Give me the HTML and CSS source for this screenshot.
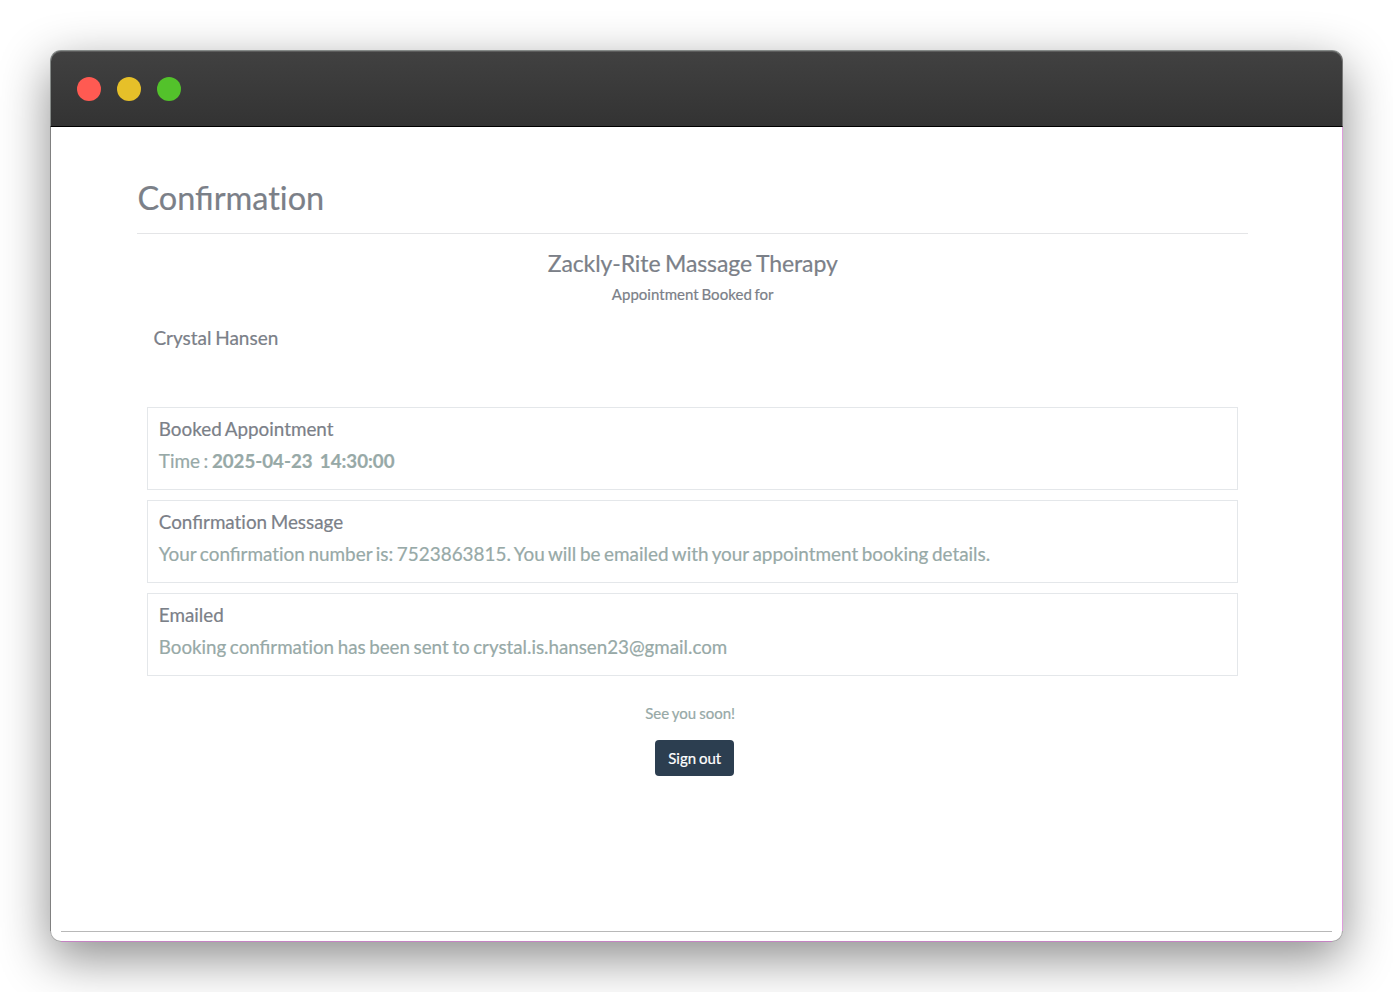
FILE: index.html
```html
<!DOCTYPE html>
<html lang="en">
<head>
<meta charset="utf-8">
<title>Confirmation</title>
<link rel="stylesheet" href="styles.css">
</head>
<body>
<div class="window">
  <div class="titlebar">
    <span class="dot red"></span><span class="dot yellow"></span><span class="dot green"></span>
  </div>
  <main class="content">
    <h1>Confirmat&zwnj;ion</h1>
    <header class="business">
      <h2>Zackly-Rite Massage Therapy</h2>
      <p>Appointment Booked for</p>
    </header>
    <p class="client">Crystal Hansen</p>
    <div class="cards">
      <section class="card">
        <h3>Booked Appointment</h3>
        <p>Time : <b>2025-04-23&nbsp; 14:30:00</b></p>
      </section>
      <section class="card">
        <h3>Confirmat&zwnj;ion Message</h3>
        <p class="message">Your confirmat&zwnj;ion number is: 7523863815. You will be emailed with your appointment booking details.</p>
      </section>
      <section class="card">
        <h3>Emailed</h3>
        <p class="emailed">Booking confirmat&zwnj;ion has been sent to crystal.is.hansen23@gmail.com</p>
      </section>
    </div>
    <footer class="closing">
      <p>See you soon!</p>
      <button class="signout">Sign out</button>
    </footer>
  </main>
  <div class="base"><div class="base-line"></div></div>
</div>
</body>
</html>
```
FILE: styles.css
```css
* { box-sizing: border-box; }
body {
  margin: 0;
  padding: 50px;
  height: 992px;
  overflow: hidden;
  background: #fff;
  font-family: Lato, sans-serif;
  color: #7b8088;
  word-spacing: -1.2px;
}
h1, h2, h3, p { margin: 0; font-weight: 400; -webkit-text-stroke: .2px currentColor; }
.window {
  display: flex;
  flex-direction: column;
  width: 1293px;
  height: 892px;
  border-radius: 11px;
  background: #fff;
  box-shadow: 0 16px 50px rgba(0, 0, 0, .46);
}
.titlebar {
  display: flex;
  align-items: center;
  gap: 16px;
  height: 77px;
  padding: 0 26px;
  border: 1px solid #858a88;
  border-right-color: #777;
  border-bottom-color: #000;
  border-radius: 11px 11px 0 0;
  background: linear-gradient(#414141, #333);
  box-shadow: inset 0 1px #5c5c5c;
}
.dot { width: 24px; height: 24px; border-radius: 50%; }
.red { background: #ff5a52; }
.yellow { background: #e6c029; }
.green { background: #53c22b; }
.content {
  flex: 1;
  padding: 49px 94px 0 86.4px;
  border-left: 1px solid #808080;
  border-right: 1px solid #df9cdc;
}
h1 {
  height: 58px;
  border-bottom: 1px solid #e4e5e7;
  font-size: 32.5px;
  line-height: 43px;
}
.business { padding-top: 14px; text-align: center; }
.business h2 { font-size: 23px; line-height: 30px; letter-spacing: -.1px; }
.business p { font-size: 15px; line-height: 20px; margin-top: 6px; letter-spacing: .04px; }
.client { margin: 20px 16px 0; font-size: 19px; line-height: 28px; }
.cards { display: grid; gap: 10px; margin: 55px 10px 0; }
.card {
  height: 83px;
  padding: 7px 10px 7px 10.4px;
  border: 1px solid #e4e7ea;
  font-size: 18.9px;
}
.card h3 { font-size: 18.85px; line-height: 28px; }
.card p { margin-top: 4px; line-height: 28px; color: #97a9a7; }
.card b { font-size: 18.7px; word-spacing: -.9px; }
.card .emailed { font-size: 18.75px; }
.closing { display: flex; flex-direction: column; align-items: center; }
.closing p { margin: 26px 5px 0 0; font-size: 15px; line-height: 22px; color: #97a9a7; word-spacing: -.8px; }
.signout {
  width: 79px;
  height: 36px;
  margin: 16px 0 0 4px;
  padding: 0;
  border: 0;
  border-radius: 4px;
  background: #2c3e50;
  color: #fff;
  font: 15px Lato, sans-serif;
  word-spacing: -1px;
  -webkit-text-stroke: .2px currentColor;
}
.base {
  height: 11px;
  padding: 0 10px;
  border: 1px solid #aaa;
  border-top: 0;
  border-radius: 0 0 11px 11px;
}
.base-line {
  height: 11px;
  border-top: 1px solid #b8b8b8;
  border-bottom: 1px solid #c583c3;
}
```
